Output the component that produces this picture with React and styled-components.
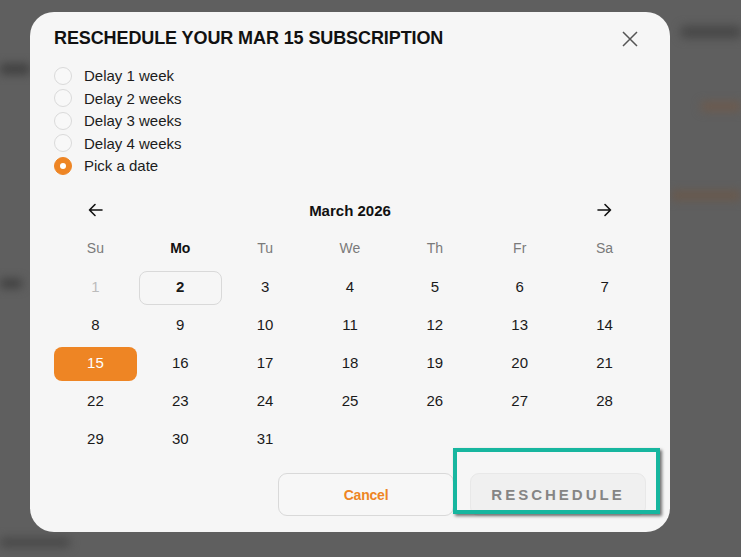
import styled, { createGlobalStyle } from "styled-components"

const GlobalStyle = createGlobalStyle`
  * { box-sizing: border-box; }
  html, body { margin: 0; padding: 0; }
  body {
    font-family: "Liberation Sans", Arial, sans-serif;
    background: #5f5f5f;
    color: #1a1a1a;
  }
`

const ORANGE = "#ee8524"

const Screen = styled.div`
  position: relative;
  width: 741px;
  height: 557px;
  overflow: hidden;
  background: #5f5f5f;
`

const BackPage = styled.div`
  display: flex;
  justify-content: space-between;
  height: 100%;
  filter: blur(5px);
`

const BackColumn = styled.div`
  display: flex;
  flex-direction: column;
  align-items: ${(p) => (p.$right ? "flex-end" : "flex-start")};
  padding-top: ${(p) => (p.$right ? "26px" : "64px")};
`

const Ghost = styled.div`
  width: ${(p) => p.$w}px;
  height: ${(p) => p.$h || 8}px;
  margin-top: ${(p) => p.$mt || 0}px;
  background: ${(p) => p.$color || "#3e3e3e"};
  border-radius: 3px;
`

const Modal = styled.div`
  position: absolute;
  left: 30px;
  top: 12px;
  width: 640px;
  height: 520px;
  background: #f6f6f6;
  border-radius: 24px;
  padding: 15px 24px 16px;
  display: flex;
  flex-direction: column;
`

const TitleRow = styled.div`
  display: flex;
  align-items: center;
  justify-content: space-between;
  height: 24px;
`

const Title = styled.h2`
  margin: 0;
  font-size: 18px;
  font-weight: 700;
  letter-spacing: -0.1px;
  color: #111;
`

const CloseButton = styled.button`
  border: none;
  background: none;
  padding: 0;
  margin-right: 6px;
  width: 20px;
  height: 20px;
  display: flex;
  align-items: center;
  justify-content: center;
  color: #555;
`

const Options = styled.div`
  display: flex;
  flex-direction: column;
  margin-top: 14px;
`

const Option = styled.label`
  display: flex;
  align-items: center;
  gap: 12px;
  height: 22.5px;
  font-size: 15px;
  color: #1c1c1c;
`

const Radio = styled.span`
  width: 18px;
  height: 18px;
  border-radius: 50%;
  flex-shrink: 0;
  display: flex;
  align-items: center;
  justify-content: center;
  border: 1px solid ${(p) => (p.$checked ? ORANGE : "#dadada")};
  background: ${(p) => (p.$checked ? ORANGE : "#f8f8f8")};

  &::after {
    content: "";
    display: ${(p) => (p.$checked ? "block" : "none")};
    width: 6px;
    height: 6px;
    border-radius: 50%;
    background: #fff;
  }
`

const Calendar = styled.div`
  display: grid;
  grid-template-columns: repeat(7, 1fr);
  column-gap: 2px;
  margin-top: 18px;
`

const MonthHeader = styled.div`
  grid-column: 2 / 7;
  display: flex;
  align-items: center;
  justify-content: center;
  height: 30px;
  font-size: 15px;
  font-weight: 700;
  color: #111;
`

const ArrowButton = styled.button`
  border: none;
  background: none;
  padding: 0;
  height: 30px;
  display: flex;
  align-items: center;
  justify-content: center;
  color: #111;
`

const Weekday = styled.div`
  height: 22px;
  margin-top: 12px;
  margin-bottom: 12px;
  display: flex;
  align-items: center;
  justify-content: center;
  font-size: 14px;
  font-weight: ${(p) => (p.$current ? 700 : 400)};
  color: ${(p) => (p.$current ? "#111" : "#7a7a7a")};
`

const Day = styled.div`
  height: 34px;
  margin-bottom: 4px;
  border-radius: 8px;
  display: flex;
  align-items: center;
  justify-content: center;
  padding-bottom: 3px;
  font-size: 15px;
  font-weight: ${(p) => (p.$today ? 700 : 400)};
  color: ${(p) => (p.$selected ? "#fff" : p.$disabled ? "#bcbcbc" : "#1a1a1a")};
  background: ${(p) => (p.$selected ? ORANGE : "transparent")};
  border: 1px solid ${(p) => (p.$today ? "#d9d9d9" : "transparent")};
`

const Footer = styled.div`
  position: relative;
  display: flex;
  justify-content: flex-end;
  gap: 16px;
  margin-top: 12px;
`

const Button = styled.button`
  width: 176px;
  height: 43px;
  border-radius: 9px;
  font-family: "Liberation Sans", Arial, sans-serif;
  font-weight: 700;
  cursor: pointer;
  font-size: ${(p) => (p.$primary ? "15px" : "14px")};
  letter-spacing: ${(p) => (p.$primary ? "3px" : "-0.2px")};
  color: ${(p) => (p.$primary ? "#858585" : ORANGE)};
  background: ${(p) => (p.$primary ? "#f0f0f0" : "#f7f7f7")};
  border: 1px solid ${(p) => (p.$primary ? "#e8e8e8" : "#d9d9d9")};
`

const Highlight = styled.div`
  position: absolute;
  right: -14px;
  top: -25px;
  width: 207px;
  height: 66px;
  border: 4px solid #17b69f;
  box-shadow: 2px 2px 3px rgba(0, 0, 0, 0.55);
  pointer-events: none;
`

const options = ["Delay 1 week", "Delay 2 weeks", "Delay 3 weeks", "Delay 4 weeks", "Pick a date"]
const weekdays = ["Su", "Mo", "Tu", "We", "Th", "Fr", "Sa"]

function CloseIcon() {
  return (
    <svg width="16" height="16" viewBox="0 0 16 16" fill="none" stroke="currentColor" strokeWidth="1.5">
      <path d="M1 1 L15 15 M15 1 L1 15" />
    </svg>
  )
}

function Arrow({ left }) {
  return (
    <svg width="15" height="14" viewBox="0 0 15 14" fill="none" stroke="currentColor" strokeWidth="1.6" strokeLinecap="round" strokeLinejoin="round">
      {left ? <path d="M14 7 H1.5 M7 1.5 L1.5 7 L7 12.5" /> : <path d="M1 7 H13.5 M8 1.5 L13.5 7 L8 12.5" />}
    </svg>
  )
}

export default function App() {
  const days = Array.from({ length: 31 }, (_, i) => i + 1)

  return (
    <Screen>
      <GlobalStyle />
      <BackPage>
        <BackColumn>
          <Ghost $w={30} $h={10} />
          <Ghost $w={22} $h={9} $mt={205} />
          <Ghost $w={70} $h={9} $mt={250} $color="#474747" />
        </BackColumn>
        <BackColumn $right>
          <Ghost $w={60} $h={12} $color="#474747" />
          <Ghost $w={40} $h={9} $mt={64} $color="#6e5a4c" />
          <Ghost $w={70} $h={9} $mt={80} $color="#6a584a" />
        </BackColumn>
      </BackPage>

      <Modal>
        <TitleRow>
          <Title>RESCHEDULE YOUR MAR 15 SUBSCRIPTION</Title>
          <CloseButton aria-label="Close">
            <CloseIcon />
          </CloseButton>
        </TitleRow>

        <Options>
          {options.map((label, i) => (
            <Option key={label}>
              <Radio $checked={i === options.length - 1} />
              {label}
            </Option>
          ))}
        </Options>

        <Calendar>
          <ArrowButton aria-label="Previous month">
            <Arrow left />
          </ArrowButton>
          <MonthHeader>March 2026</MonthHeader>
          <ArrowButton aria-label="Next month">
            <Arrow />
          </ArrowButton>

          {weekdays.map((d) => (
            <Weekday key={d} $current={d === "Mo"}>
              {d}
            </Weekday>
          ))}

          {days.map((d) => (
            <Day key={d} $disabled={d === 1} $today={d === 2} $selected={d === 15}>
              {d}
            </Day>
          ))}
        </Calendar>

        <Footer>
          <Button>Cancel</Button>
          <Button $primary>RESCHEDULE</Button>
          <Highlight />
        </Footer>
      </Modal>
    </Screen>
  )
}
